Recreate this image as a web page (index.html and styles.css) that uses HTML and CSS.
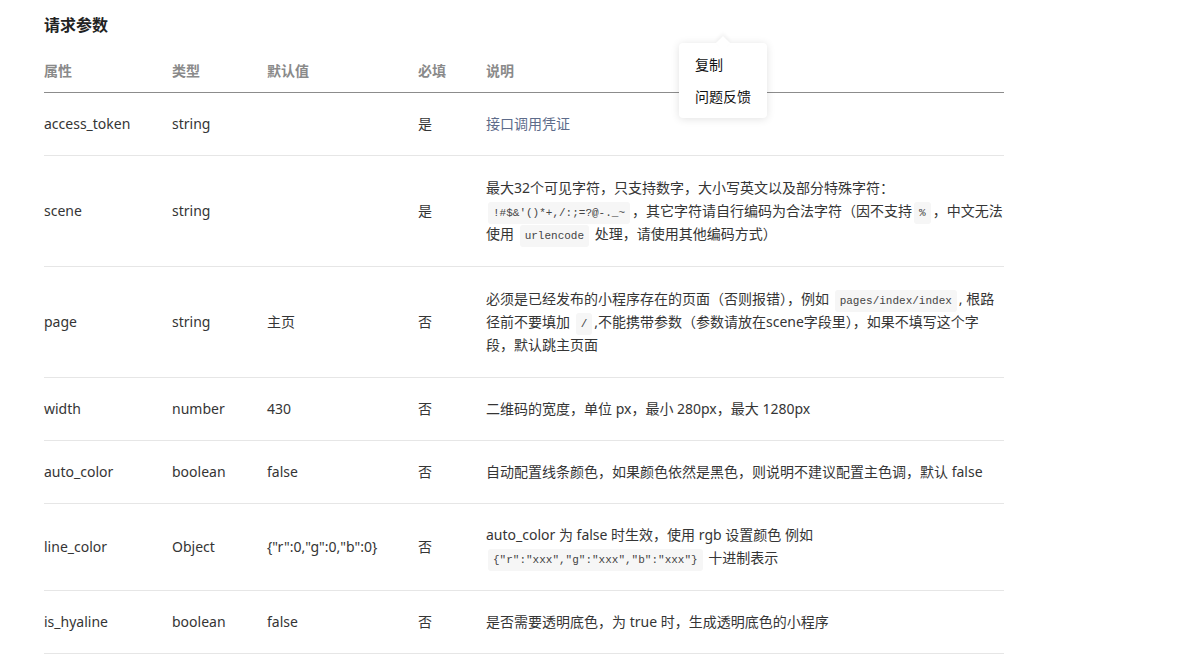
FILE: index.html
```html
<!DOCTYPE html>
<html lang="zh-CN">
<head>
<meta charset="utf-8">
<title>请求参数</title>
<link rel="stylesheet" href="styles.css">
</head>
<body>
<div class="page">
  <h3 class="title">请求参数</h3>
  <table class="params">
    <colgroup>
      <col class="c1"><col class="c2"><col class="c3"><col class="c4"><col class="c5">
    </colgroup>
    <thead>
      <tr><th>属性</th><th>类型</th><th>默认值</th><th>必填</th><th>说明</th></tr>
    </thead>
    <tbody>
      <tr><td>access_token</td><td>string</td><td></td><td>是</td><td class="muted">接口调用凭证</td></tr>
      <tr class="tall"><td>scene</td><td>string</td><td></td><td>是</td><td>最大32个可见字符，只支持数字，大小写英文以及部分特殊字符：<wbr><code>!#$&amp;'()*+,/:;=?@-._~</code>，其它字符请自行编码为合法字符（因不支持<code>%</code>，中文无法<wbr>使用 <code>urlencode</code> 处理，请使用其他编码方式）</td></tr>
      <tr class="tall"><td>page</td><td>string</td><td>主页</td><td>否</td><td>必须是已经发布的小程序存在的页面（否则报错），例如 <code>pages/index/index</code>, 根路径前不要填加 <code>/</code>,不能携带参数（参数请放在scene字段里），如果不填写这个字段，默认跳主页面</td></tr>
      <tr><td>width</td><td>number</td><td>430</td><td>否</td><td>二维码的宽度，单位 px，最小 280px，最大 1280px</td></tr>
      <tr><td>auto_color</td><td>boolean</td><td>false</td><td>否</td><td>自动配置线条颜色，如果颜色依然是黑色，则说明不建议配置主色调，默认 false</td></tr>
      <tr class="tall two"><td>line_color</td><td>Object</td><td>{"r":0,"g":0,"b":0}</td><td>否</td><td>auto_color 为 false 时生效，使用 rgb 设置颜色 例如 <code>{"r":"xxx","g":"xxx","b":"xxx"}</code> 十进制表示</td></tr>
      <tr><td>is_hyaline</td><td>boolean</td><td>false</td><td>否</td><td>是否需要透明底色，为 true 时，生成透明底色的小程序</td></tr>
    </tbody>
  </table>
</div>
<div class="menu">
  <div class="menu-item">复制</div>
  <div class="menu-item">问题反馈</div>
</div>
</body>
</html>
```

FILE: styles.css
```css
html, body {
  margin: 0;
  padding: 0;
  background: #fff;
}
body {
  font-family: "Noto Sans", "Noto Sans CJK SC", sans-serif;
  font-size: 14px;
  color: #353535;
  overflow: hidden;
}
.page {
  padding: 12px 0 0 44px;
  width: 960px;
}
.title {
  margin: 0;
  font-size: 16px;
  font-weight: bold;
  line-height: 26px;
  color: #222;
}
.params {
  width: 960px;
  border-collapse: collapse;
  margin-top: 18px;
}
.params col.c1 { width: 128px; }
.params col.c2 { width: 95px; }
.params col.c3 { width: 151px; }
.params col.c4 { width: 68px; }
.params th {
  text-align: left;
  font-weight: bold;
  color: #8a8a8a;
  padding: 3px 0 9px;
  line-height: 24px;
  border-bottom: 1px solid #8c8c8c;
}
.params td {
  padding: 19px 0 20px;
  line-height: 23px;
  border-bottom: 1px solid #e6e6e6;
  vertical-align: middle;
}
.params tr.tall td {
  padding: 20px 0 21px;
}
.params tr.two td {
  padding: 19px 0 21px;
}
.muted {
  color: #5d6b8a;
}
code {
  font-family: "Liberation Mono", "DejaVu Sans Mono", monospace;
  font-size: 11px;
  line-height: 0;
  white-space: nowrap;
  background: #f6f6f6;
  color: #444;
  padding: 5px 5px;
  border-radius: 3px;
  margin: 0 2px;
}
.menu {
  position: absolute;
  left: 679px;
  top: 43px;
  width: 88px;
  padding: 6px 0 5px;
  background: #fff;
  border-radius: 4px;
  box-shadow: 0 1px 8px rgba(0, 0, 0, 0.12);
}
.menu::before {
  content: "";
  position: absolute;
  left: 39px;
  top: -5px;
  width: 10px;
  height: 10px;
  background: #fff;
  transform: rotate(45deg);
  box-shadow: -2px -2px 4px rgba(0, 0, 0, 0.05);
}
.menu-item {
  position: relative;
  padding: 0 16px;
  line-height: 32px;
  font-size: 14px;
  color: #111;
}
```
